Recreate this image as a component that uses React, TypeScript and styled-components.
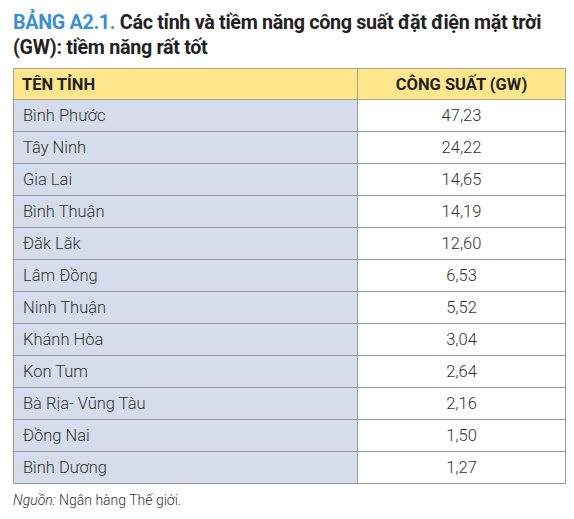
import React from "react";
import styled, { createGlobalStyle } from "styled-components";

const rows: [string, string][] = [
  ["Bình Phước", "47,23"],
  ["Tây Ninh", "24,22"],
  ["Gia Lai", "14,65"],
  ["Bình Thuận", "14,19"],
  ["Đăk Lăk", "12,60"],
  ["Lâm Đồng", "6,53"],
  ["Ninh Thuận", "5,52"],
  ["Khánh Hòa", "3,04"],
  ["Kon Tum", "2,64"],
  ["Bà Rịa- Vũng Tàu", "2,16"],
  ["Đồng Nai", "1,50"],
  ["Bình Dương", "1,27"],
];

const GlobalStyle = createGlobalStyle`
  html, body {
    margin: 0;
    padding: 0;
    background: #ffffff;
  }
  body {
    font-family: Roboto, "Noto Sans", sans-serif;
    color: #333333;
  }
`;

const Page = styled.div`
  width: 574px;
  padding: 10px 9px 0 13px;
  box-sizing: border-box;
`;

const Title = styled.h1`
  margin: 0 0 8px;
  font-size: 19.7px;
  line-height: 25px;
  font-weight: 700;
  color: #222222;
  letter-spacing: -0.3px;
  white-space: nowrap;
`;

const Label = styled.span`
  color: #3b8fd4;
`;

const Table = styled.table`
  width: 552px;
  border-collapse: collapse;
  table-layout: fixed;
`;

const HeadCell = styled.th<{ $center?: boolean }>`
  height: 31px;
  padding: 0 8px;
  background: #fde68c;
  border: 1px solid #aaa391;
  font-size: 16.5px;
  font-weight: 700;
  color: #222222;
  text-align: ${(p) => (p.$center ? "center" : "left")};
  box-sizing: border-box;
`;

const Cell = styled.td<{ $name?: boolean }>`
  height: 32px;
  padding: 0 9px;
  border: 1px solid #9a9a9a;
  background: ${(p) => (p.$name ? "#d5dcec" : "#ffffff")};
  font-size: 16.5px;
  font-weight: 300;
  color: #333333;
  text-align: ${(p) => (p.$name ? "left" : "center")};
  box-sizing: border-box;
`;

const Source = styled.p`
  margin: 8px 0 0;
  font-size: 14px;
  font-weight: 300;
  color: #333333;
`;

export default function App() {
  return (
    <Page>
      <GlobalStyle />
      <Title>
        <Label>BẢNG A2.1.</Label> Các tỉnh và tiềm năng công suất đặt điện mặt trời
        <br />
        (GW): tiềm năng rất tốt
      </Title>
      <Table>
        <colgroup>
          <col style={{ width: 344 }} />
          <col style={{ width: 208 }} />
        </colgroup>
        <thead>
          <tr>
            <HeadCell>TÊN TỈNH</HeadCell>
            <HeadCell $center>CÔNG SUẤT (GW)</HeadCell>
          </tr>
        </thead>
        <tbody>
          {rows.map(([name, value]) => (
            <tr key={name}>
              <Cell $name>{name}</Cell>
              <Cell>{value}</Cell>
            </tr>
          ))}
        </tbody>
      </Table>
      <Source>
        <i>Nguồn:</i> Ngân hàng Thế giới.
      </Source>
    </Page>
  );
}
